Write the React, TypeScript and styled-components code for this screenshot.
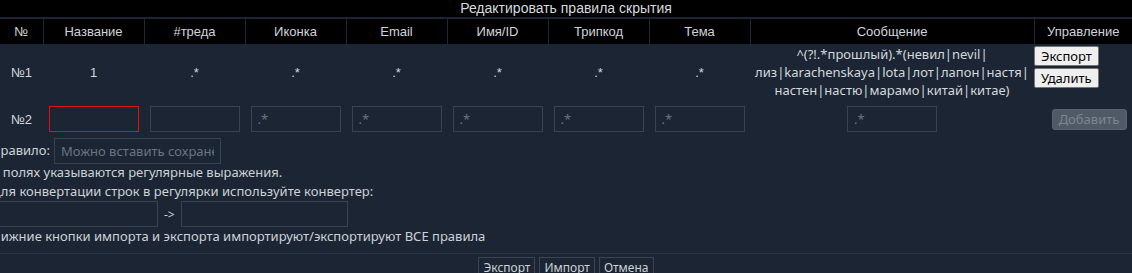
import styled, { createGlobalStyle } from 'styled-components'

const GlobalStyle = createGlobalStyle`
  html, body {
    margin: 0;
    padding: 0;
    background: #1b2533;
    overflow: hidden;
  }
  body {
    font-family: "Noto Sans", "Liberation Sans", sans-serif;
    color: #c9ced4;
  }
`

const Modal = styled.div`
  width: 1132px;
  height: 273px;
  background: #1b2533;
  overflow: hidden;
`

const TitleBar = styled.div`
  height: 17px;
  background: #000;
  color: #d6dade;
  font-family: "Liberation Sans", sans-serif;
  font-size: 14px;
  line-height: 16px;
  text-align: center;
  margin-bottom: 2px;
`

const Table = styled.table`
  width: 1132px;
  table-layout: fixed;
  border-collapse: collapse;
  border-spacing: 0;
`

const HeadCell = styled.th`
  height: 25px;
  padding: 0;
  background: #000;
  color: #d0d4d9;
  font-family: "Liberation Sans", sans-serif;
  font-weight: normal;
  font-size: 13px;
  text-align: center;
  border-right: 1px solid #1e2937;
  &:last-child {
    border-right: none;
  }
`

const Cell = styled.td<{ $top?: boolean }>`
  padding: 0;
  text-align: center;
  font-family: "Liberation Sans", sans-serif;
  font-size: 13px;
  color: #d4d8dc;
  vertical-align: ${({ $top }) => ($top ? 'top' : 'middle')};
`

const FirstRow = styled.tr`
  height: 56px;
`

const SecondRow = styled.tr`
  height: 38px;
`

const Message = styled.div`
  padding: 1px 0 0;
  font-family: "Noto Sans", sans-serif;
  font-size: 13px;
  line-height: 18px;
  color: #d4d8dc;
`

const MessageLine = styled.div`
  white-space: nowrap;
`

const ControlStack = styled.div`
  display: flex;
  flex-direction: column;
  align-items: flex-start;
  gap: 2px;
  padding-top: 2px;
`

const LightButton = styled.button`
  background: #efefef;
  border: 1px solid #767676;
  border-radius: 2px;
  color: #000;
  font-family: "Noto Sans", sans-serif;
  font-size: 13px;
  line-height: 17px;
  padding: 0 6px;
  height: 20px;
`

const Field = styled.input<{ $error?: boolean; $wide?: boolean }>`
  box-sizing: border-box;
  width: ${({ $wide }) => ($wide ? '167px' : '90px')};
  height: 26px;
  background: transparent;
  border: 1px solid ${({ $error }) => ($error ? '#e01010' : '#384351')};
  color: #c9ced4;
  font-family: "Noto Sans", sans-serif;
  font-size: 13px;
  padding: 0 6px;
  outline: none;
  vertical-align: middle;
  &::placeholder {
    color: #6b7480;
  }
`

const AddButton = styled.button`
  width: 75px;
  height: 21px;
  background: #505a66;
  border: 1px solid #5a6470;
  border-radius: 3px;
  color: #7c8590;
  font-family: "Noto Sans", sans-serif;
  font-size: 13px;
  padding: 0;
  margin-left: 12px;
`

const Notes = styled.div`
  margin-left: -9px;
  font-family: "Noto Sans", sans-serif;
  font-size: 13px;
  line-height: 19px;
  color: #cdd2d7;
`

const RuleLine = styled.div`
  display: flex;
  align-items: center;
  gap: 4px;
  height: 25px;
`

const ConverterLine = styled.div`
  display: flex;
  align-items: center;
  gap: 6px;
  height: 26px;
`

const Arrow = styled.span`
  font-size: 12px;
`

const Footer = styled.div`
  margin-top: 7px;
  border-top: 1px solid #2a3544;
  display: flex;
  justify-content: center;
  gap: 4px;
  padding-top: 3px;
`

const FooterButton = styled.button`
  height: 20px;
  background: #1b2533;
  border: 1px solid #3a4452;
  color: #cdd2d7;
  font-family: "Noto Sans", sans-serif;
  font-size: 12px;
  padding: 0 4px;
`

const columns = ['№', 'Название', '#треда', 'Иконка', 'Email', 'Имя/ID', 'Трипкод', 'Тема', 'Сообщение', 'Управление']
const widths = [43, 101, 101, 101, 101, 101, 101, 101, 284, 98]

export default function App() {
  return (
    <>
      <GlobalStyle />
      <Modal>
        <TitleBar>Редактировать правила скрытия</TitleBar>
        <Table>
          <colgroup>
            {widths.map((w, i) => (
              <col key={i} style={{ width: w }} />
            ))}
          </colgroup>
          <thead>
            <tr>
              {columns.map((c) => (
                <HeadCell key={c}>{c}</HeadCell>
              ))}
            </tr>
          </thead>
          <tbody>
            <FirstRow>
              <Cell>№1</Cell>
              <Cell>1</Cell>
              <Cell>.*</Cell>
              <Cell>.*</Cell>
              <Cell>.*</Cell>
              <Cell>.*</Cell>
              <Cell>.*</Cell>
              <Cell>.*</Cell>
              <Cell $top>
                <Message>
                  <MessageLine>^(?!.*прошлый).*(невил|nevil|</MessageLine>
                  <MessageLine>лиз|karachenskaya|lota|лот|лапон|настя|</MessageLine>
                  <MessageLine>настен|настю|марамо|китай|китае)</MessageLine>
                </Message>
              </Cell>
              <Cell $top>
                <ControlStack>
                  <LightButton>Экспорт</LightButton>
                  <LightButton>Удалить</LightButton>
                </ControlStack>
              </Cell>
            </FirstRow>
            <SecondRow>
              <Cell>№2</Cell>
              <Cell>
                <Field $error />
              </Cell>
              <Cell>
                <Field />
              </Cell>
              <Cell>
                <Field placeholder=".*" />
              </Cell>
              <Cell>
                <Field placeholder=".*" />
              </Cell>
              <Cell>
                <Field placeholder=".*" />
              </Cell>
              <Cell>
                <Field placeholder=".*" />
              </Cell>
              <Cell>
                <Field placeholder=".*" />
              </Cell>
              <Cell>
                <Field placeholder=".*" />
              </Cell>
              <Cell>
                <AddButton disabled>Добавить</AddButton>
              </Cell>
            </SecondRow>
          </tbody>
        </Table>
        <Notes>
          <RuleLine>
            Правило: <Field $wide placeholder="Можно вставить сохранённое правило" />
          </RuleLine>
          <div>В полях указываются регулярные выражения.</div>
          <div>Для конвертации строк в регулярки используйте конвертер:</div>
          <ConverterLine>
            <Field $wide />
            <Arrow>-&gt;</Arrow>
            <Field $wide />
          </ConverterLine>
          <div>Нижние кнопки импорта и экспорта импортируют/экспортируют ВСЕ правила</div>
        </Notes>
        <Footer>
          <FooterButton>Экспорт</FooterButton>
          <FooterButton>Импорт</FooterButton>
          <FooterButton>Отмена</FooterButton>
        </Footer>
      </Modal>
    </>
  )
}
